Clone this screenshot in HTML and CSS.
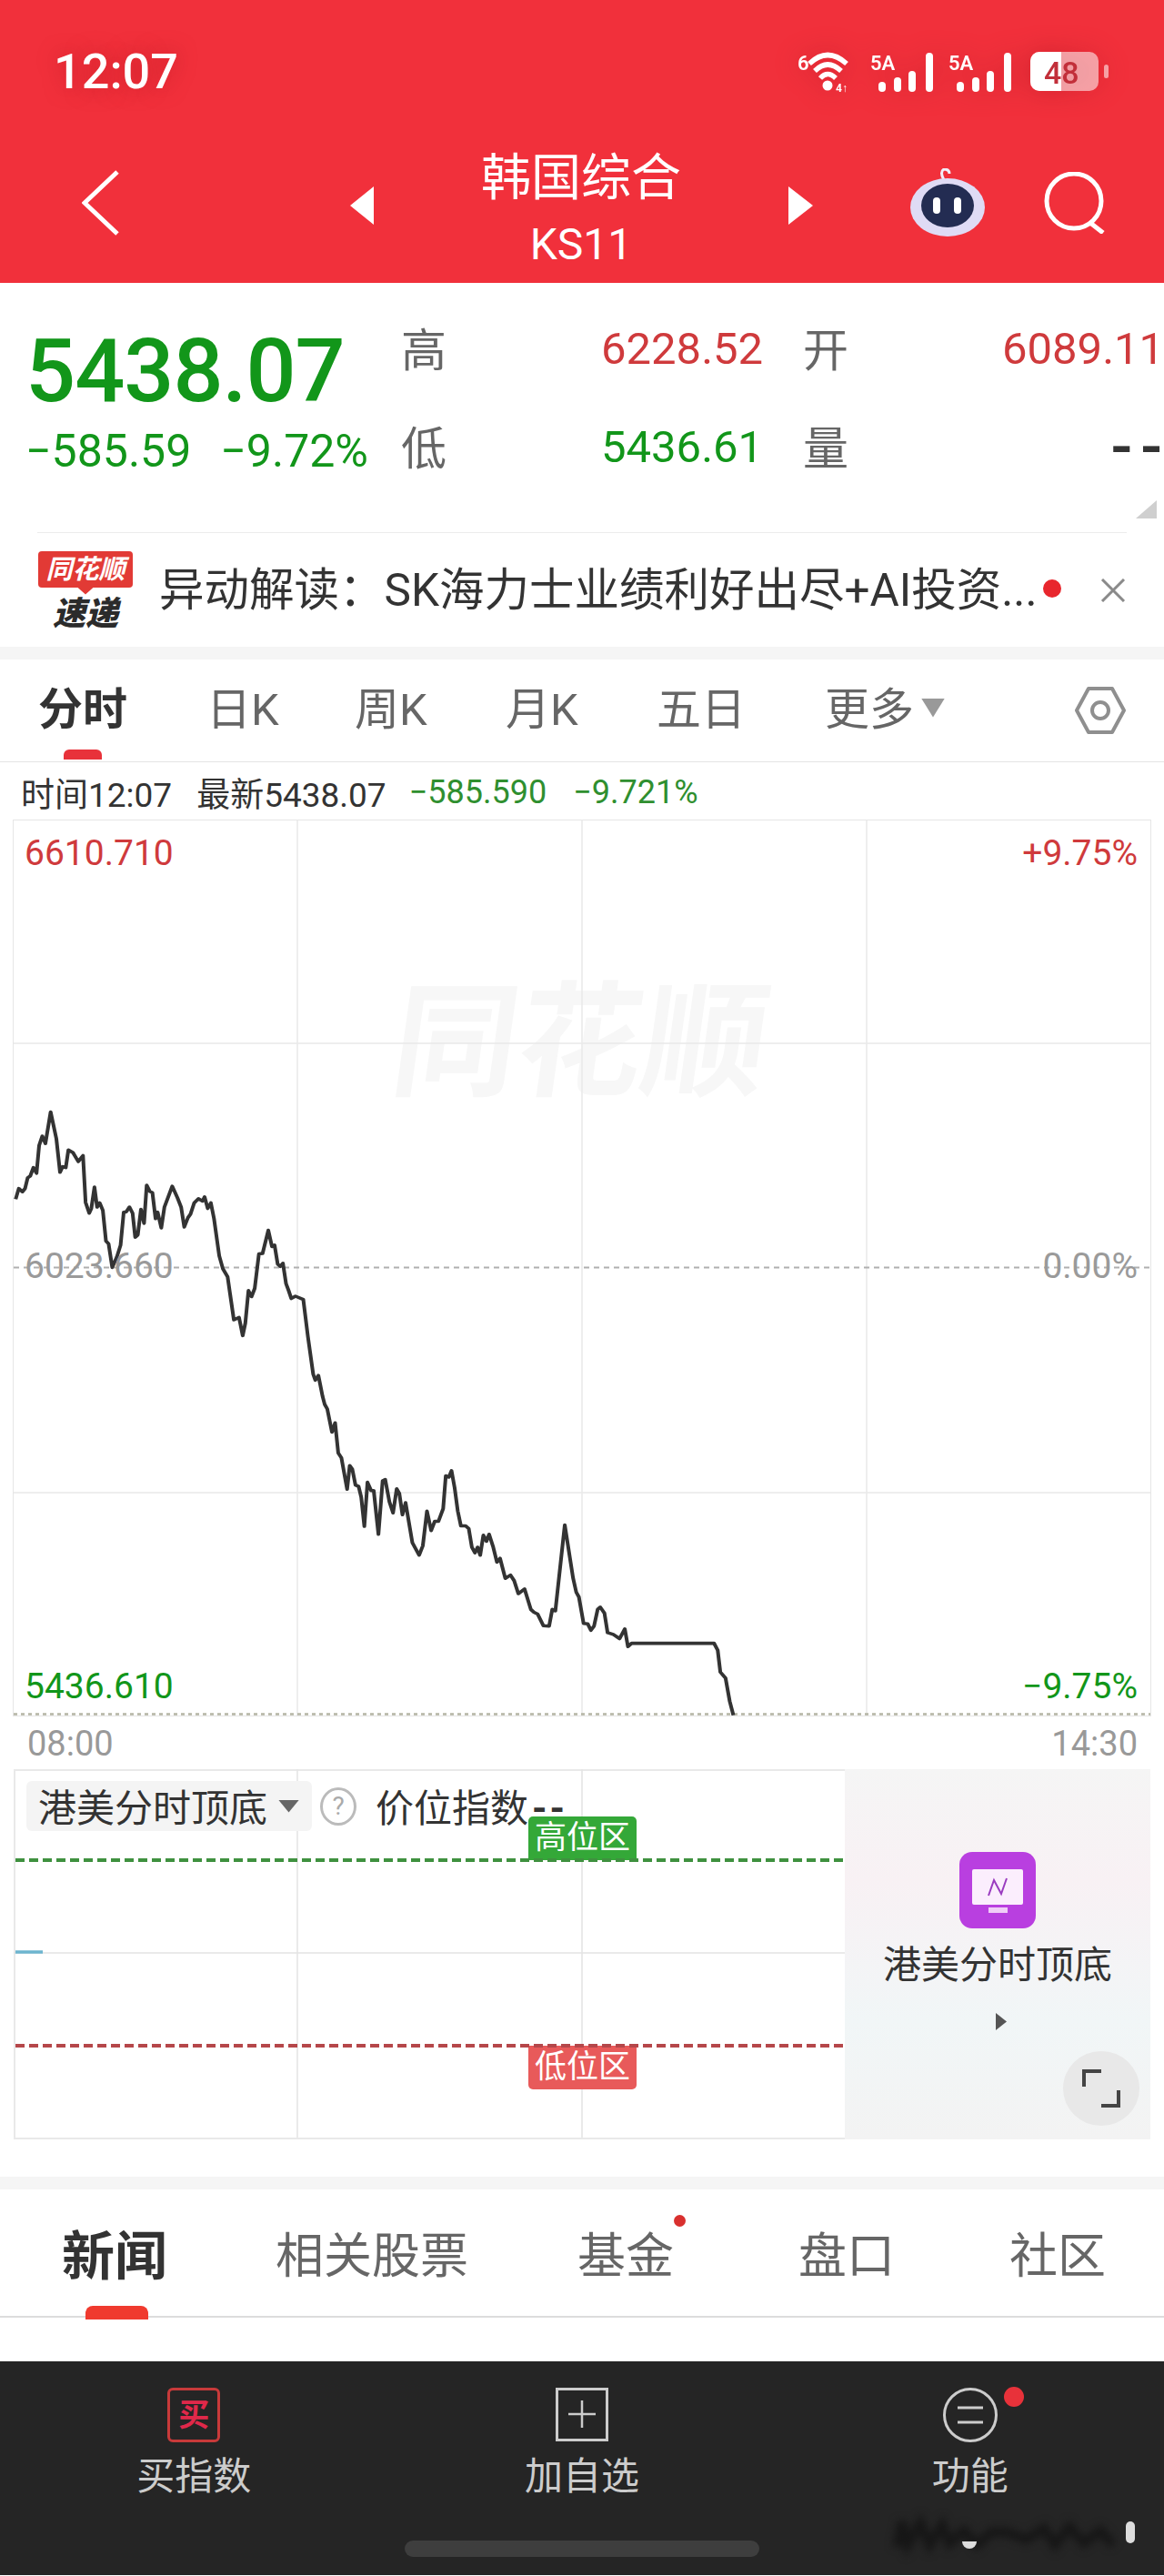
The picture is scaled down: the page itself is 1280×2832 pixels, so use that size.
FILE: index.html
```html
<!DOCTYPE html>
<html lang="zh-CN">
<head>
  <meta charset="UTF-8">
  <meta name="viewport" content="width=device-width, initial-scale=1">
  <title>韩国综合 KS11</title>
  <link rel="stylesheet" href="styles.css">
</head>
<body>

<div class="page">

  <div class="header">
    <div class="statusbar">
      <div class="clock">12:07</div>
      <div class="status-icons">
        <svg width="66" height="52" viewBox="0 0 66 52">
          <text x="0" y="20" class="st-small">6</text>
          <g fill="none" stroke="#fff" stroke-width="5.5">
            <path d="M13 13 Q33 -6 54 13"/>
            <path d="M19 21 Q33 7 48 21"/>
            <path d="M25 29 Q33 20 42 29"/>
          </g>
          <circle cx="33" cy="37" r="5.5" fill="#fff"/>
          <text x="42" y="44" class="st-tiny">4↑</text>
        </svg>
        <svg class="sig-one" width="71" height="46" viewBox="0 0 71 46">
          <text x="0" y="20" class="st-small">5A</text>
          <g fill="#fff">
            <rect x="9" y="33" width="8" height="11" rx="4"/>
            <rect x="26" y="28" width="8" height="16" rx="4"/>
            <rect x="42" y="21" width="8" height="23" rx="4"/>
            <rect x="61" y="1" width="8" height="43" rx="4"/>
          </g>
        </svg>
        <svg class="sig-two" width="71" height="46" viewBox="0 0 71 46">
          <text x="0" y="20" class="st-small">5A</text>
          <g fill="#fff">
            <rect x="9" y="33" width="8" height="11" rx="4"/>
            <rect x="26" y="28" width="8" height="16" rx="4"/>
            <rect x="42" y="21" width="8" height="23" rx="4"/>
            <rect x="61" y="1" width="8" height="43" rx="4"/>
          </g>
        </svg>
        <svg class="battery" width="86" height="44" viewBox="0 0 86 44">
          <rect x="0" y="0" width="75" height="43" rx="10" fill="#fff" fill-opacity=".55"/>
          <path d="M10 0H34V43H10A10 10 0 0 1 0 33V10A10 10 0 0 1 10 0Z" fill="#fff"/>
          <rect x="81" y="14" width="5" height="15" rx="2.5" fill="#fff" fill-opacity=".55"/>
          <text x="15" y="35" class="st-batt">48</text>
        </svg>
      </div>
    </div>

    <div class="navbar">
      <svg class="nav-back" width="41" height="72" viewBox="0 0 41 72">
        <path d="M39 2 L3 36 L39 70" fill="none" stroke="#fff" stroke-width="5"/>
      </svg>
      <div class="tri-left"></div>
      <div class="nav-title">
        <div class="nav-name">韩国综合</div>
        <div class="nav-code">KS11</div>
      </div>
      <div class="tri-right"></div>
      <svg class="nav-robot" width="84" height="76" viewBox="0 0 84 76">
        <path d="M38 13 Q33 4 38 1 Q44 1 44 6" fill="none" stroke="#f1edf9" stroke-width="3"/>
        <ellipse cx="42" cy="43" rx="41" ry="32" fill="#dfdbf5"/>
        <ellipse cx="42" cy="41" rx="29" ry="24" fill="#232c52"/>
        <rect x="26" y="32" width="8" height="18" rx="4" fill="#fff"/>
        <rect x="49" y="32" width="8" height="18" rx="4" fill="#fff"/>
      </svg>
      <svg class="nav-search" width="70" height="68" viewBox="0 0 70 68">
        <circle cx="34" cy="32" r="30" fill="none" stroke="#fff" stroke-width="5"/>
        <path d="M52 56 L66 67" fill="none" stroke="#fff" stroke-width="5"/>
      </svg>
    </div>
  </div>

  <div class="quote">
    <div class="quote-main">
      <div class="price green">5438.07</div>
      <div class="change green"><span>−585.59</span><span>−9.72%</span></div>
    </div>
    <div class="quote-grid">
      <div class="q-label">高</div>
      <div class="q-val red">6228.52</div>
      <div class="q-label">开</div>
      <div class="q-val red q-end">6089.11</div>
      <div class="q-label">低</div>
      <div class="q-val green">5436.61</div>
      <div class="q-label">量</div>
      <div class="q-val q-end q-dash"><span class="q-dash-first">-</span>-</div>
    </div>
    <div class="quote-corner"></div>
  </div>

  <div class="news-strip">
    <div class="flash-logo">
      <div class="flash-flag">同花顺</div>
      <div class="flash-sub">速递</div>
    </div>
    <div class="news-text">异动解读：SK海力士业绩利好出尽+AI投资...</div>
    <div class="news-dot"></div>
    <svg class="news-close" width="28" height="26" viewBox="0 0 28 26">
      <path d="M2 1 L26 25 M26 1 L2 25" stroke="#8a8a8a" stroke-width="3" fill="none"/>
    </svg>
  </div>

  <div class="band"></div>

  <div class="period-tabs">
    <div class="period on">分时</div>
    <div class="period">日K</div>
    <div class="period">周K</div>
    <div class="period">月K</div>
    <div class="period">五日</div>
    <div class="period">更多</div>
    <div class="more-arrow"></div>
    <svg class="gear" width="56" height="54" viewBox="0 0 56 54">
      <path d="M15 3 H41 L54 27 L41 51 H15 L2 27 Z" fill="none" stroke="#8f8f8f" stroke-width="4" stroke-linejoin="round"/>
      <circle cx="28" cy="27" r="9" fill="none" stroke="#8f8f8f" stroke-width="4"/>
    </svg>
  </div>

  <div class="tick-info">
    <span class="tick-a">时间12:07</span>
    <span class="tick-b">最新5438.07</span>
    <span class="tick-c">−585.590</span>
    <span class="tick-d">−9.721%</span>
  </div>

  <div class="chart">
    <div class="watermark">同花顺</div>
    <svg class="chart-svg" width="1250" height="984" viewBox="0 0 1250 984">
      <g stroke="#e9e9e9" stroke-width="1.5" fill="none">
        <path d="M312 0V984M625 0V984M938 0V984M0 245H1250M0 739H1250"/>
      </g>
      <path d="M0 491.5H1250" stroke="#b0b0b0" stroke-width="2" stroke-dasharray="6 5" fill="none"/>
      <path d="M0 982.5H1250" stroke="#b5b5a5" stroke-width="2.5" stroke-dasharray="4 4" fill="none"/>
      <polyline transform="translate(-15 198) scale(.574 .5102)" fill="none" stroke="#333" stroke-width="7" stroke-linejoin="round"
        points="30,428 36,405 43,412 48,405 53,382 58,378 64,360 70,372 75,312 81,292 87,308 97,240 108,298 115,370 120,358 126,360 131,322 140,328 150,347 159,334 164,435 171,458 175,448 181,402 186,445 191,436 197,452 203,518 208,524 215,575 224,552 231,527 237,456 242,455 248,445 254,458 259,510 264,505 270,450 276,480 281,398 287,411 292,414 298,470 302,456 309,490 315,445 330,400 340,425 347,445 353,488 360,468 365,460 372,436 380,427 388,432 392,423 398,448 404,436 410,470 420,550 427,578 436,595 448,688 458,683 465,722 470,695 476,625 482,638 488,620 496,546 503,545 514,495 521,530 526,527 532,568 537,573 542,566 548,610 553,625 558,642 566,637 581,644 590,725 600,805 604,818 610,808 618,853 622,870 627,880 636,930 642,910 648,975 654,985 665,1053 670,1002 675,1010 681,1044 687,1047 692,1070 698,1133 704,1038 711,1056 716,1056 725,1150 733,1035 738,1032 746,1080 753,1104 760,1052 765,1062 771,1108 777,1082 790,1168 803,1195 810,1175 818,1100 826,1142 833,1122 840,1122 849,1095 854,1024 860,1027 865,1013 871,1050 877,1100 883,1132 892,1132 898,1138 904,1178 910,1190 915,1178 920,1195 926,1152 932,1165 937,1150 945,1178 952,1210 958,1202 968,1245 978,1238 985,1250 993,1278 1005,1268 1017,1312 1023,1318 1030,1322 1041,1347 1052,1348 1058,1312 1064,1315 1082,1130 1098,1245 1104,1275 1109,1285 1118,1342 1126,1343 1132,1357 1138,1348 1145,1312 1150,1307 1158,1320 1164,1362 1175,1366 1187,1375 1197,1354 1203,1392 1210,1385 1368,1385 1375,1400 1380,1447 1390,1460 1398,1510 1405,1540"/>
    </svg>
    <div class="axis axis-tl red">6610.710</div>
    <div class="axis axis-tr red">+9.75%</div>
    <div class="axis axis-ml gray">6023.660</div>
    <div class="axis axis-mr gray">0.00%</div>
    <div class="axis axis-bl green">5436.610</div>
    <div class="axis axis-br green">−9.75%</div>
  </div>

  <div class="time-axis">
    <span>08:00</span>
    <span>14:30</span>
  </div>

  <div class="sub-chart">
    <div class="sub-plot">
      <svg class="sub-svg" width="914" height="405" viewBox="0 0 914 405">
        <path d="M312 0V405M625 0V405M0 202H914" stroke="#e4e4e4" stroke-width="1.5" fill="none"/>
        <path d="M2 201H32" stroke="#6db5cf" stroke-width="3.5" fill="none"/>
      </svg>
      <div class="tag tag-high">高位区</div>
      <div class="tag tag-low">低位区</div>
      <svg class="sub-dash" width="914" height="405" viewBox="0 0 914 405">
        <path d="M2 100H914" stroke="#3f913f" stroke-width="4" stroke-dasharray="10 5" fill="none"/>
        <path d="M2 304H914" stroke="#b5474a" stroke-width="4" stroke-dasharray="10 5" fill="none"/>
      </svg>
      <div class="sub-head">
        <div class="chip">港美分时顶底<i class="chip-arrow"></i></div>
        <div class="help">?</div>
        <div class="sub-name">价位指数<span class="sub-dash-val">--</span></div>
      </div>
    </div>
    <div class="sub-panel">
      <svg class="panel-icon" width="84" height="84" viewBox="0 0 84 84">
        <rect width="84" height="84" rx="14" fill="#b93fe0"/>
        <rect x="14" y="19" width="56" height="39" rx="2" fill="#fbeefd"/>
        <rect x="32" y="61" width="21" height="6" fill="#f0cdf7"/>
        <path d="M32 48 L38 31 L46 46 L52 29" fill="none" stroke="#9a3cc0" stroke-width="2"/>
      </svg>
      <div class="panel-name">港美分时顶底</div>
      <div class="panel-arrow"></div>
      <div class="expand">
        <svg width="44" height="44" viewBox="0 0 44 44">
          <path d="M22 3 H3 V20" fill="none" stroke="#444" stroke-width="4"/>
          <path d="M22 41 H41 V24" fill="none" stroke="#444" stroke-width="4"/>
        </svg>
      </div>
    </div>
  </div>

  <div class="gap-white"></div>
  <div class="band"></div>

  <div class="info-tabs">
    <div class="info-tab on">新闻</div>
    <div class="info-tab">相关股票</div>
    <div class="info-tab">基金<i class="info-dot"></i></div>
    <div class="info-tab">盘口</div>
    <div class="info-tab">社区</div>
  </div>

  <div class="gap-tabs"></div>

  <div class="bottom-bar">
    <div class="action">
      <div class="buy-icon">买</div>
      <div class="action-label">买指数</div>
    </div>
    <div class="action">
      <svg width="58" height="60" viewBox="0 0 58 60">
        <rect x="1.5" y="1.5" width="55" height="56" fill="none" stroke="#ccc" stroke-width="3"/>
        <path d="M29 14V44M14 29H44" stroke="#ccc" stroke-width="2.5" fill="none"/>
      </svg>
      <div class="action-label">加自选</div>
    </div>
    <div class="action">
      <svg width="60" height="60" viewBox="0 0 60 60">
        <ellipse cx="30" cy="30" rx="28.5" ry="28.5" fill="none" stroke="#ccc" stroke-width="3"/>
        <path d="M16 22H44M16 38H44" stroke="#ccc" stroke-width="3" fill="none"/>
      </svg>
      <i class="action-dot"></i>
      <div class="action-label">功能</div>
    </div>
    <div class="home-bar"></div>
    <svg class="smudge" width="280" height="50" viewBox="0 0 280 50">
      <path d="M8 38 L14 10 L20 36 L34 12 L44 36 L58 14 L66 34 L82 20 L96 36 L112 22 L130 22 L150 30 L170 18 L182 36 L198 16 L214 34 L232 20 L246 36" fill="none" stroke="#161616" stroke-width="10"/>
    </svg>
    <div class="smudge-spot"></div>
    <div class="smudge-mark"></div>
  </div>

</div>

</body>
</html>
```

FILE: styles.css
```css
html, body {
  margin: 0;
  padding: 0;
  background: #fff;
}

.page {
  width: 1280px;
  height: 2832px;
  overflow: hidden;
  font-family: Roboto, "Noto Sans CJK SC", sans-serif;
  color: #333;
}

.green { color: #12961a; }
.red { color: #cf3a3c; }
.gray { color: #9a9a9a; }

/* red header */
.header {
  height: 311px;
  background: #f1303b;
  color: #fff;
}

.statusbar {
  height: 160px;
  padding: 52px 61px 0 59px;
  box-sizing: border-box;
  display: flex;
  justify-content: space-between;
  align-items: flex-start;
}

.clock {
  font-size: 54px;
  font-weight: 500;
  line-height: 54px;
  text-shadow: 0 0 22px rgba(170, 20, 30, .55);
}

.status-icons {
  display: flex;
  align-items: flex-start;
  margin-top: 5px;
  filter: drop-shadow(0 0 14px rgba(170, 20, 30, .45));
}

.sig-one { margin-left: 14px; }
.sig-two { margin-left: 15px; }
.battery { margin-left: 19px; }

.st-small { font: 600 22px Roboto, sans-serif; fill: #fff; }
.st-tiny { font: 700 12px Roboto, sans-serif; fill: #fff; }
.st-batt { font: 500 34px Roboto, sans-serif; fill: #c22f3a; }

.navbar {
  height: 126px;
  padding-left: 90px;
  display: flex;
  align-items: center;
}

.nav-back { margin-right: 254px; }

.tri-left, .tri-right {
  width: 0;
  height: 0;
  margin-top: 6px;
  border-top: 21px solid transparent;
  border-bottom: 21px solid transparent;
}

.tri-left { border-right: 26px solid #fff; }
.tri-right { border-left: 27px solid #fff; }

.nav-title {
  width: 456px;
  padding-top: 12px;
  text-align: center;
}

.nav-name {
  font-size: 55px;
  line-height: 60px;
}

.nav-code {
  font-size: 48px;
  line-height: 48px;
  margin-top: 20px;
}

.nav-robot { margin-left: 106px; }
.nav-search { margin-left: 63px; }

/* quote block */
.quote {
  position: relative;
  height: 274px;
  display: flex;
  box-sizing: border-box;
  padding-left: 28px;
}

.quote-main {
  width: 413px;
  padding-top: 47px;
}

.price {
  font-size: 97px;
  font-weight: 500;
  line-height: 100px;
  letter-spacing: -1px;
}

.change {
  display: flex;
  gap: 32px;
  font-size: 50px;
  line-height: 76px;
}

.quote-grid {
  display: grid;
  grid-template-columns: 220px 222px 219px 176px;
  grid-auto-rows: 108px;
  padding-top: 18px;
  align-items: center;
}

.q-label {
  font-size: 50px;
  color: #666;
  margin-bottom: 4px;
}

.q-val {
  font-size: 49px;
  white-space: nowrap;
}

.q-end {
  text-align: right;
}

.q-dash {
  color: #333;
  font-size: 70px;
  font-weight: 500;
  line-height: 70px;
}

.q-dash-first {
  margin-right: 9px;
}

.quote-corner {
  position: absolute;
  left: 1249px;
  top: 239px;
  width: 23px;
  height: 20px;
  background: #cfcfcf;
  clip-path: polygon(100% 0, 100% 100%, 0 100%);
}

/* news strip */
.news-strip {
  height: 126px;
  margin: 0 41px;
  box-sizing: border-box;
  border-top: 1px solid #ececec;
  display: flex;
  align-items: center;
}

.flash-logo {
  width: 104px;
  margin-left: 1px;
  text-align: center;
}

.flash-flag {
  position: relative;
  height: 40px;
  background: #e23a35;
  border-radius: 4px;
  color: #fff;
  font-size: 29px;
  font-weight: 700;
  font-style: italic;
  line-height: 40px;
  white-space: nowrap;
}

.flash-flag::after {
  content: "";
  position: absolute;
  left: 43px;
  top: 40px;
  width: 18px;
  height: 8px;
  background: #e23a35;
  clip-path: polygon(0 0, 100% 0, 50% 100%);
}

.flash-sub {
  margin-top: 12px;
  font-size: 36px;
  line-height: 34px;
  font-weight: 900;
  font-style: italic;
  color: #2b2b2b;
}

.news-text {
  width: 961px;
  margin-left: 29px;
  font-size: 49.5px;
  line-height: 60px;
  color: #333;
  white-space: nowrap;
}

.news-dot {
  width: 20px;
  height: 20px;
  margin-left: 11px;
  margin-bottom: 4px;
  border-radius: 50%;
  background: #e8262d;
}

.news-close { margin-left: 43px; }

.band {
  height: 14px;
  background: #f5f5f5;
}

/* period tabs */
.period-tabs {
  height: 113px;
  box-sizing: border-box;
  padding-left: 42px;
  border-bottom: 1px solid #e4e4e4;
  display: grid;
  grid-template-columns: 185px 163px 166px 166px 185px 106px 169px auto;
  align-items: center;
}

.period {
  position: relative;
  font-size: 49px;
  line-height: 60px;
  color: #666;
  white-space: nowrap;
}

.period.on {
  font-weight: 700;
  color: #333;
}

.period.on::after {
  content: "";
  position: absolute;
  left: 28px;
  top: 73px;
  width: 42px;
  height: 11px;
  border-radius: 6px 6px 0 0;
  background: #e8323a;
}

.more-arrow {
  width: 26px;
  height: 21px;
  background: #999;
  clip-path: polygon(0 0, 100% 0, 50% 100%);
  margin-bottom: 6px;
}

.tick-info {
  height: 64px;
  padding: 2px 0 0 23px;
  box-sizing: border-box;
  display: flex;
  align-items: center;
  font-size: 37px;
  color: #333;
}

.tick-b { margin-left: 27px; }
.tick-c { margin-left: 25px; font-size: 36px; color: #2f8f2f; }
.tick-d { margin-left: 29px; font-size: 36px; color: #2f8f2f; }

/* main chart, a free canvas */
.chart {
  position: relative;
  width: 1250px;
  height: 984px;
  margin-left: 15px;
  box-sizing: border-box;
  outline: 1.5px solid #e6e6e6;
}

.chart-svg {
  position: absolute;
  left: 0;
  top: 0;
}

.watermark {
  position: absolute;
  left: 418px;
  top: 170px;
  font-size: 137px;
  line-height: 150px;
  font-weight: 700;
  color: #f7f7f7;
  transform: skewX(-8deg);
  white-space: nowrap;
}

.axis {
  position: absolute;
  font-size: 39px;
  line-height: 44px;
}

.axis-tl { left: 12px; top: 14px; }
.axis-tr { right: 14px; top: 14px; }
.axis-ml { left: 12px; top: 468px; }
.axis-mr { right: 14px; top: 468px; }
.axis-bl { left: 12px; top: 930px; }
.axis-br { right: 14px; top: 930px; }

.time-axis {
  height: 59px;
  padding: 2px 29px 0 30px;
  box-sizing: border-box;
  display: flex;
  justify-content: space-between;
  align-items: center;
  font-size: 38px;
  color: #999;
}

/* indicator chart */
.sub-chart {
  width: 1250px;
  height: 407px;
  margin-left: 15px;
  display: flex;
}

.sub-plot {
  position: relative;
  width: 914px;
  box-sizing: border-box;
  border: 2px solid #e9e9e9;
  border-right: none;
}

.sub-svg, .sub-dash {
  position: absolute;
  left: -2px;
  top: -2px;
}

.sub-dash { z-index: 2; }

.sub-head {
  position: relative;
  z-index: 3;
  display: flex;
  align-items: flex-start;
  padding: 11px 0 0 12px;
}

.chip {
  width: 314px;
  height: 55px;
  padding: 6px 0 0 13px;
  box-sizing: border-box;
  background: #f4f4f4;
  border-radius: 6px;
  font-size: 42px;
  line-height: 49px;
  display: flex;
  align-items: center;
  white-space: nowrap;
}

.chip-arrow {
  width: 23px;
  height: 14px;
  margin-left: 12px;
  margin-bottom: 6px;
  background: #666;
  clip-path: polygon(0 0, 100% 0, 50% 100%);
}

.help {
  width: 40px;
  height: 42px;
  margin: 7px 0 0 9px;
  box-sizing: border-box;
  border: 3px solid #bbb;
  border-radius: 50%;
  color: #aaa;
  font-size: 28px;
  line-height: 36px;
  text-align: center;
}

.sub-name {
  margin: 3px 0 0 21px;
  font-size: 42px;
  line-height: 55px;
  white-space: nowrap;
}

.sub-dash-val {
  margin-left: 4px;
  font-weight: 700;
  letter-spacing: 3px;
}

.tag {
  position: absolute;
  left: 564px;
  width: 119px;
  height: 48px;
  color: #fff;
  font-size: 35px;
  line-height: 48px;
  text-align: center;
}

.tag-high {
  top: 50px;
  background: #34a838;
  border-radius: 5px 5px 0 0;
}

.tag-low {
  top: 302px;
  background: #e85a5a;
  border-radius: 0 0 5px 5px;
}

.sub-panel {
  position: relative;
  width: 336px;
  background: linear-gradient(180deg, #f5f5f5 0%, #f8f1f4 30%, #f1f6f7 68%, #f3f3f3 100%);
  display: flex;
  flex-direction: column;
  align-items: center;
  padding-top: 91px;
  box-sizing: border-box;
}

.panel-name {
  margin-top: 16px;
  font-size: 42px;
  line-height: 50px;
  white-space: nowrap;
}

.panel-arrow {
  width: 12px;
  height: 19px;
  margin-top: 27px;
  margin-left: 8px;
  background: #555;
  clip-path: polygon(0 0, 100% 50%, 0 100%);
}

.expand {
  position: absolute;
  left: 240px;
  top: 310px;
  width: 84px;
  height: 82px;
  border-radius: 50%;
  background: #e8e8e8;
  display: flex;
  align-items: center;
  justify-content: center;
}

.gap-white { height: 41px; }

/* info tabs */
.info-tabs {
  height: 141px;
  box-sizing: border-box;
  padding-left: 68px;
  border-bottom: 2px solid #ddd;
  display: grid;
  grid-template-columns: 235px 332px 243px 232px auto;
  align-items: center;
}

.info-tab {
  position: relative;
  font-size: 53px;
  line-height: 62px;
  color: #666;
  white-space: nowrap;
  margin-top: 8px;
}

.info-tab.on {
  font-size: 58px;
  font-weight: 700;
  color: #333;
}

.info-tab.on::after {
  content: "";
  position: absolute;
  left: 26px;
  top: 85px;
  width: 69px;
  height: 15px;
  border-radius: 8px 8px 0 0;
  background: #f03a2e;
}

.info-dot {
  position: absolute;
  left: 106px;
  top: -15px;
  width: 13px;
  height: 13px;
  border-radius: 50%;
  background: #d9302e;
}

.gap-tabs { height: 48px; }

/* bottom bar */
.bottom-bar {
  position: relative;
  height: 235px;
  background: #252525;
  display: grid;
  grid-template-columns: repeat(3, 1fr);
  align-items: start;
  padding-top: 29px;
  box-sizing: border-box;
}

.action {
  position: relative;
  display: flex;
  flex-direction: column;
  align-items: center;
}

.action-label {
  margin-top: 14px;
  font-size: 42px;
  line-height: 48px;
  color: #ccc;
}

.buy-icon {
  width: 58px;
  height: 60px;
  box-sizing: border-box;
  border: 3px solid #c83a3a;
  border-radius: 6px;
  color: #e0284a;
  font-size: 34px;
  font-weight: 700;
  line-height: 54px;
  text-align: center;
}

.action-dot {
  position: absolute;
  left: 251px;
  top: -1px;
  width: 22px;
  height: 22px;
  border-radius: 50%;
  background: #e8323a;
}

.home-bar {
  position: absolute;
  left: 445px;
  top: 197px;
  width: 390px;
  height: 18px;
  border-radius: 9px;
  background: #3e3e3e;
}

.smudge {
  position: absolute;
  left: 978px;
  top: 166px;
  filter: blur(4px);
}

.smudge-spot {
  position: absolute;
  left: 1238px;
  top: 176px;
  width: 10px;
  height: 24px;
  border-radius: 5px;
  background: #ddd;
}

.smudge-mark {
  position: absolute;
  left: 1058px;
  top: 198px;
  width: 16px;
  height: 8px;
  border-radius: 0 0 8px 8px;
  background: #ddd;
}
```
